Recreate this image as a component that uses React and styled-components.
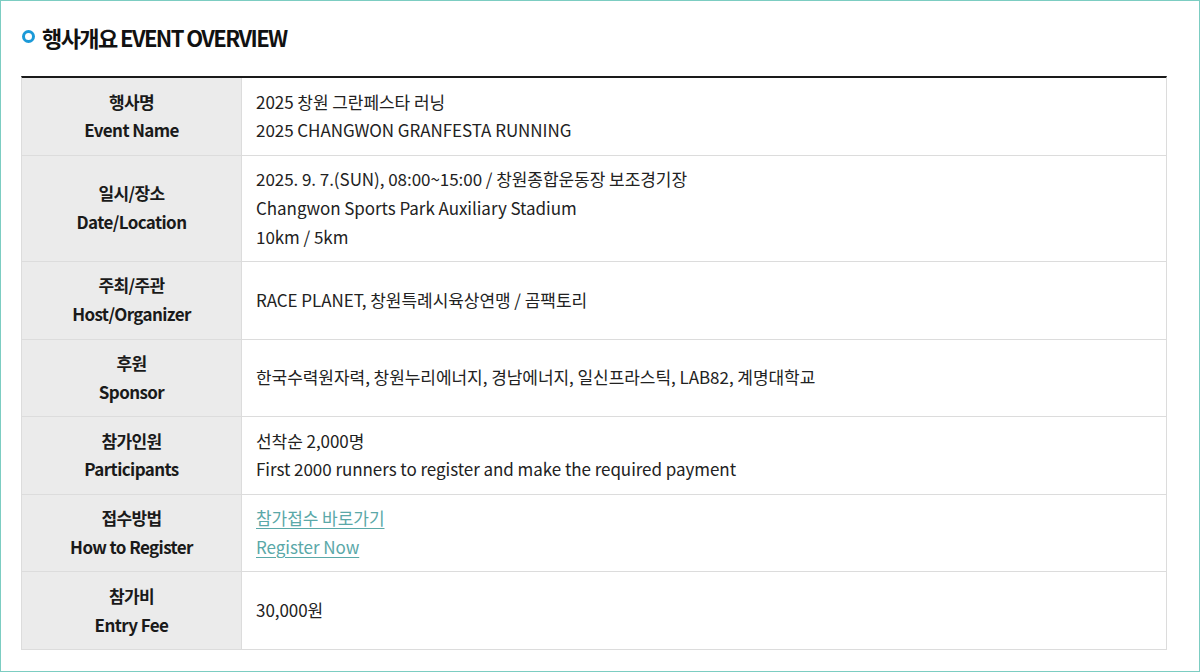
import styled, { createGlobalStyle } from "styled-components"

const GlobalStyle = createGlobalStyle`
  html, body {
    margin: 0;
    padding: 0;
    background: #fff;
  }
  * {
    box-sizing: border-box;
  }
`

const Frame = styled.div`
  width: 1200px;
  height: 672px;
  border: 1px solid #7ccdc2;
  padding: 0 32px 0 20px;
  font-family: "Noto Sans CJK KR", "Noto Sans", sans-serif;
  color: #222;
  overflow: hidden;
`

const Title = styled.h2`
  display: flex;
  align-items: center;
  gap: 7px;
  margin: 0;
  height: 75px;
  padding: 0 0 4px 1px;
  font-size: 22px;
  font-weight: 700;
  letter-spacing: -1.6px;
  color: #111;
`

const Ring = styled.span`
  width: 13px;
  height: 13px;
  border: 3px solid #1c9ad8;
  border-radius: 50%;
  flex: none;
`

const Table = styled.div`
  border-top: 2px solid #1a1a1a;
  border-left: 1px solid #dcdcdc;
  border-right: 1px solid #dcdcdc;
`

const Row = styled.div`
  display: grid;
  grid-template-columns: 220px 1fr;
  border-bottom: 1px solid #dcdcdc;
`

const Head = styled.div`
  background: #ebebeb;
  border-right: 1px solid #dcdcdc;
  display: flex;
  flex-direction: column;
  align-items: center;
  justify-content: center;
  padding: 9.5px 0;
  font-size: 17px;
  font-weight: 700;
  line-height: 28.8px;
  letter-spacing: -0.6px;
  color: #1a1a1a;
`

const Cell = styled.div`
  display: flex;
  flex-direction: column;
  justify-content: center;
  padding: 9.5px 14px;
  font-size: 17px;
  line-height: 28.8px;
  letter-spacing: -0.05px;
  color: #222;
`

const Link = styled.a`
  color: #5aa8a8;
  text-decoration: underline;
  text-underline-offset: 3px;
`

const rows = [
  { ko: "행사명", en: "Event Name", lines: ["2025 창원 그란페스타 러닝", "2025 CHANGWON GRANFESTA RUNNING"] },
  {
    ko: "일시/장소",
    en: "Date/Location",
    lines: ["2025. 9. 7.(SUN), 08:00~15:00 / 창원종합운동장 보조경기장", "Changwon Sports Park Auxiliary Stadium", "10km / 5km"],
  },
  { ko: "주최/주관", en: "Host/Organizer", lines: ["RACE PLANET, 창원특례시육상연맹 / 곰팩토리"] },
  { ko: "후원", en: "Sponsor", lines: ["한국수력원자력, 창원누리에너지, 경남에너지, 일신프라스틱, LAB82, 계명대학교"] },
  { ko: "참가인원", en: "Participants", lines: ["선착순 2,000명", "First 2000 runners to register and make the required payment"] },
  { ko: "접수방법", en: "How to Register", links: ["참가접수 바로가기", "Register Now"] },
  { ko: "참가비", en: "Entry Fee", lines: ["30,000원"] },
]

const App = () => {
  return (
    <>
      <GlobalStyle />
      <Frame>
        <Title>
          <Ring />
          행사개요 EVENT OVERVIEW
        </Title>
        <Table>
          {rows.map((r) => (
            <Row key={r.ko}>
              <Head>
                <span>{r.ko}</span>
                <span>{r.en}</span>
              </Head>
              <Cell>
                {r.lines && r.lines.map((l) => <span key={l}>{l}</span>)}
                {r.links && r.links.map((l) => (
                  <span key={l}>
                    <Link href="#">{l}</Link>
                  </span>
                ))}
              </Cell>
            </Row>
          ))}
        </Table>
      </Frame>
    </>
  )
}

export default App
